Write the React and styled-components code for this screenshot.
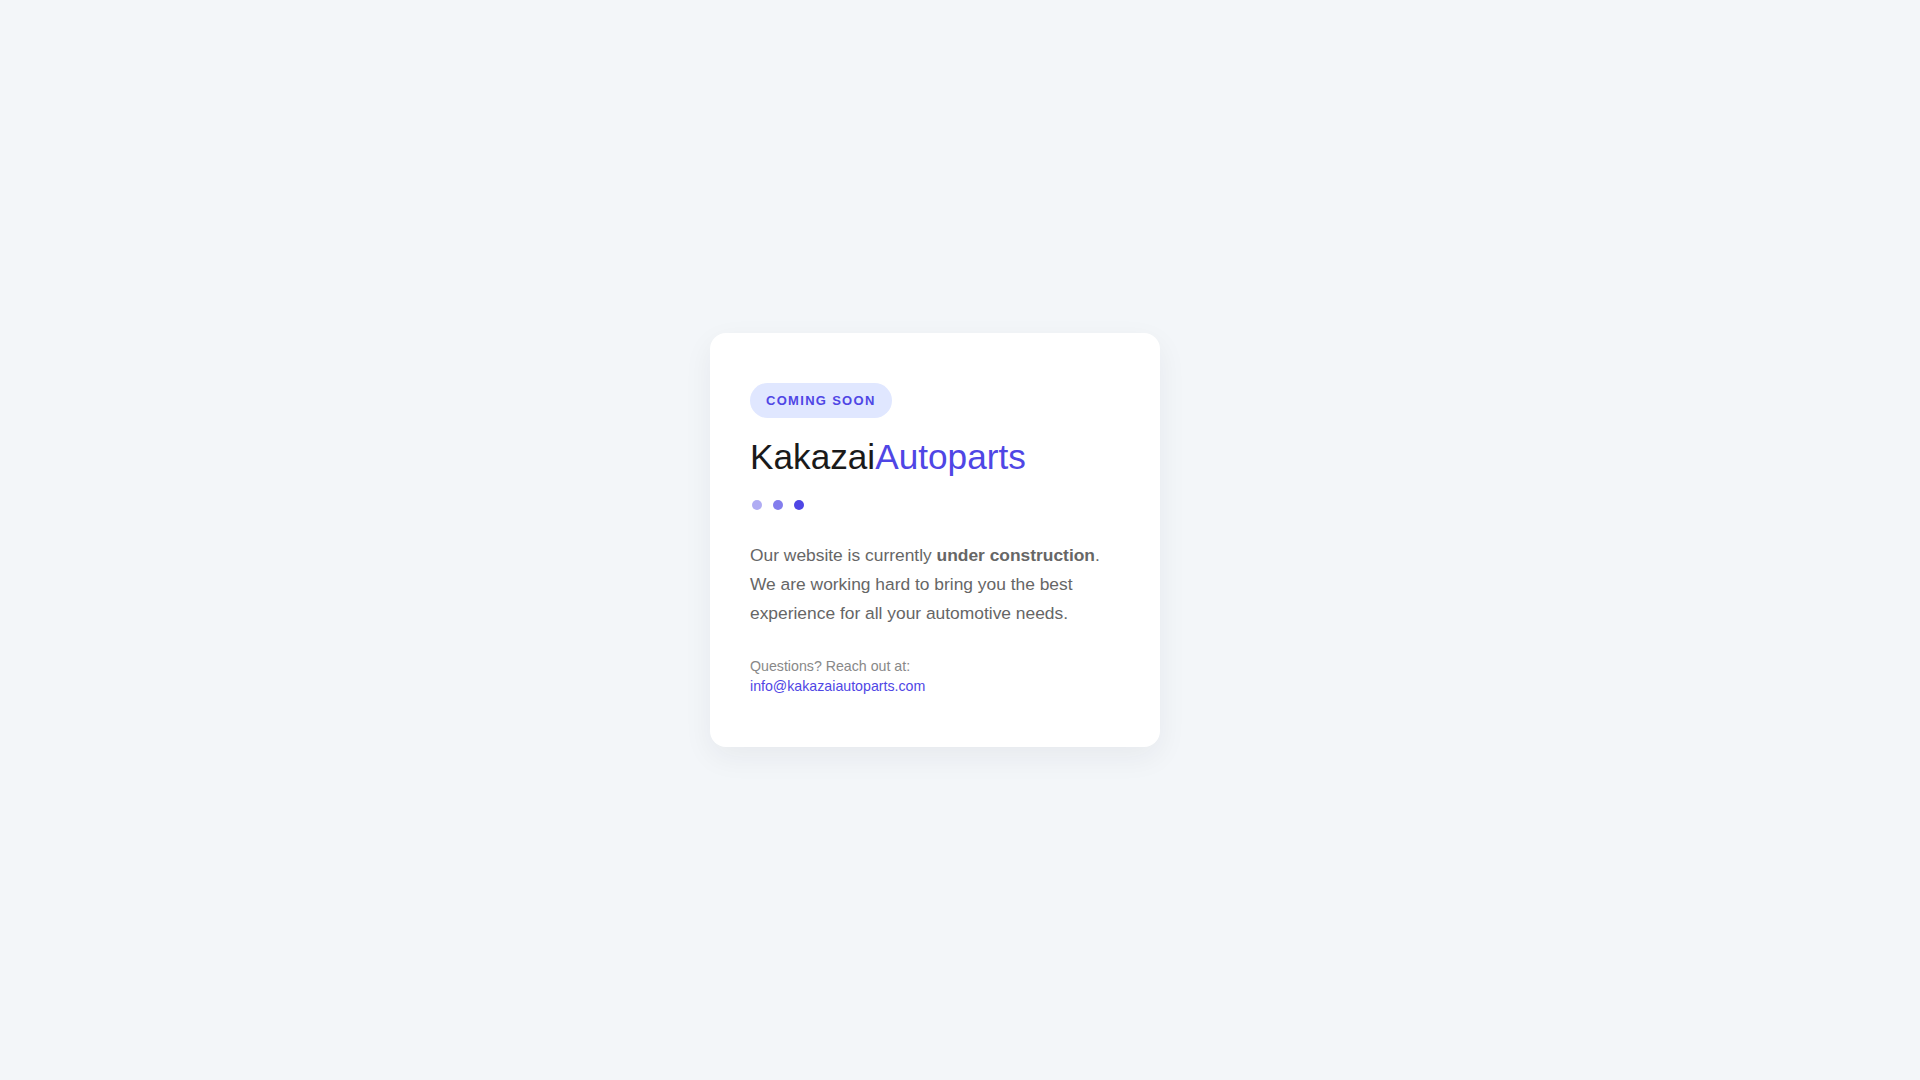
import styled, { createGlobalStyle } from "styled-components";

const GlobalStyle = createGlobalStyle`
  body {
    margin: 0;
    background: #f3f6f9;
    font-family: "Liberation Sans", Arial, sans-serif;
  }
`;

const Page = styled.main`
  min-height: 100vh;
  display: flex;
  align-items: center;
  justify-content: center;
`;

const Holder = styled.div`
  width: 500px;
`;

const Card = styled.section`
  width: 450px;
  box-sizing: border-box;
  padding: 50px 40px;
  background: #ffffff;
  border-radius: 16px;
  box-shadow: 0 10px 30px rgba(30, 41, 59, 0.06);
`;

const Badge = styled.span`
  display: inline-block;
  padding: 10px 16px;
  background: #e0e7ff;
  color: #4f46e5;
  border-radius: 18px;
  font-size: 13px;
  line-height: 15px;
  font-weight: 700;
  letter-spacing: 1.3px;
`;

const Title = styled.h1`
  margin: 18px 0 0;
  font-size: 35.2px;
  line-height: 1.2;
  font-weight: 400;
  color: #1a1a1a;
`;

const Accent = styled.span`
  color: #4f46e5;
`;

const Dots = styled.div`
  display: flex;
  gap: 11px;
  margin: 22px 0 0 2px;
`;

const Dot = styled.span`
  width: 10px;
  height: 10px;
  border-radius: 50%;
  background: #4f46e5;
  opacity: ${(p) => p.$o};
`;

const Text = styled.p`
  margin: 31px 0 0;
  font-size: 17.4px;
  line-height: 28.8px;
  color: #666666;

  strong {
    font-weight: 700;
  }
`;

const Contact = styled.div`
  margin-top: 28px;
  font-size: 14.2px;
  line-height: 20.8px;
  color: #888888;
`;

const Mail = styled.a`
  display: block;
  color: #4f46e5;
  text-decoration: none;
`;

const App = () => {
  return (
    <>
      <GlobalStyle />
      <Page>
        <Holder>
          <Card>
            <Badge>COMING SOON</Badge>
            <Title>
              Kakazai<Accent>Autoparts</Accent>
            </Title>
            <Dots>
              <Dot $o={0.45} />
              <Dot $o={0.7} />
              <Dot $o={1} />
            </Dots>
            <Text>
              Our website is currently <strong>under construction</strong>. We
              are working hard to bring you the best experience for all your
              automotive needs.
            </Text>
            <Contact>
              Questions? Reach out at:
              <Mail href="mailto:info@kakazaiautoparts.com">
                info@kakazaiautoparts.com
              </Mail>
            </Contact>
          </Card>
        </Holder>
      </Page>
    </>
  );
};

export default App;
